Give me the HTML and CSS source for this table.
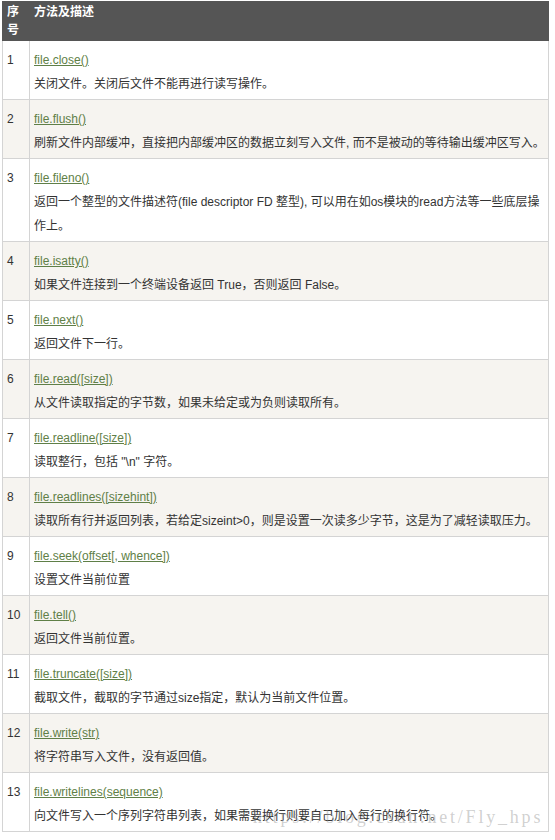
FILE: index.html
```html
<!DOCTYPE html>
<html lang="zh-CN">
<head>
<meta charset="utf-8">
<title>File 方法</title>
<link rel="stylesheet" href="styles.css">
</head>
<body>
<div class="page">
  <table class="reference">
    <thead>
      <tr><th class="num">序号</th><th>方法及描述</th></tr>
    </thead>
    <tbody>
      <tr><td class="num">1</td><td><a href="#">file.close()</a><br>关闭文件。关闭后文件不能再进行读写操作。</td></tr>
      <tr><td class="num">2</td><td><a href="#">file.flush()</a><br>刷新文件内部缓冲，直接把内部缓冲区的数据立刻写入文件, 而不是被动的等待输出缓冲区写入。</td></tr>
      <tr><td class="num">3</td><td><a href="#">file.fileno()</a><br>返回一个整型的文件描述符(file descriptor FD 整型), 可以用在如os模块的read方法等一些底层操作上。</td></tr>
      <tr><td class="num">4</td><td><a href="#">file.isatty()</a><br>如果文件连接到一个终端设备返回 True，否则返回 False。</td></tr>
      <tr><td class="num">5</td><td><a href="#">file.next()</a><br>返回文件下一行。</td></tr>
      <tr><td class="num">6</td><td><a href="#">file.read([size])</a><br>从文件读取指定的字节数，如果未给定或为负则读取所有。</td></tr>
      <tr><td class="num">7</td><td><a href="#">file.readline([size])</a><br>读取整行，包括 "\n" 字符。</td></tr>
      <tr><td class="num">8</td><td><a href="#">file.readlines([sizehint])</a><br>读取所有行并返回列表，若给定sizeint&gt;0，则是设置一次读多少字节，这是为了减轻读取压力。</td></tr>
      <tr><td class="num">9</td><td><a href="#">file.seek(offset[, whence])</a><br>设置文件当前位置</td></tr>
      <tr><td class="num">10</td><td><a href="#">file.tell()</a><br>返回文件当前位置。</td></tr>
      <tr><td class="num">11</td><td><a href="#">file.truncate([size])</a><br>截取文件，截取的字节通过size指定，默认为当前文件位置。</td></tr>
      <tr><td class="num">12</td><td><a href="#">file.write(str)</a><br>将字符串写入文件，没有返回值。</td></tr>
      <tr><td class="num">13</td><td><a href="#">file.writelines(sequence)</a><br>向文件写入一个序列字符串列表，如果需要换行则要自己加入每行的换行符。</td></tr>
    </tbody>
  </table>
  <div class="watermark">https://blog.csdn.net/Fly_hps</div>
</div>
</body>
</html>
```
FILE: styles.css
```css
html, body {
  margin: 0;
  padding: 0;
  background: #fff;
}
.page {
  position: relative;
  width: 555px;
  height: 840px;
  padding: 1px 0 0 2px;
  box-sizing: border-box;
  font-family: "Liberation Sans", "Noto Sans CJK SC", sans-serif;
  font-size: 12px;
  color: #333;
}
.reference {
  border-collapse: collapse;
  width: 547px;
  table-layout: fixed;
}
.reference th {
  background: #555;
  color: #fff;
  border: 1px solid #555;
  font-weight: bold;
  text-align: left;
  vertical-align: top;
  line-height: 18px;
  padding: 1px 4px 1px 4px;
}
.reference td {
  border: 1px solid #d4d4d4;
  vertical-align: top;
  line-height: 24px;
  padding: 7px 0 3px 4px;
}
.reference th.num,
.reference td.num {
  width: 18px;
  padding-right: 4px;
}
.reference tbody tr:nth-child(even) td {
  background: #f6f4f0;
}
.reference a {
  color: #5f7f47;
  text-decoration: underline;
}
.watermark {
  position: absolute;
  left: 253px;
  top: 808px;
  font-family: "Liberation Serif", serif;
  font-size: 18px;
  line-height: 18px;
  letter-spacing: 2.8px;
  color: rgba(150, 150, 150, 0.45);
  white-space: nowrap;
  pointer-events: none;
}
```
